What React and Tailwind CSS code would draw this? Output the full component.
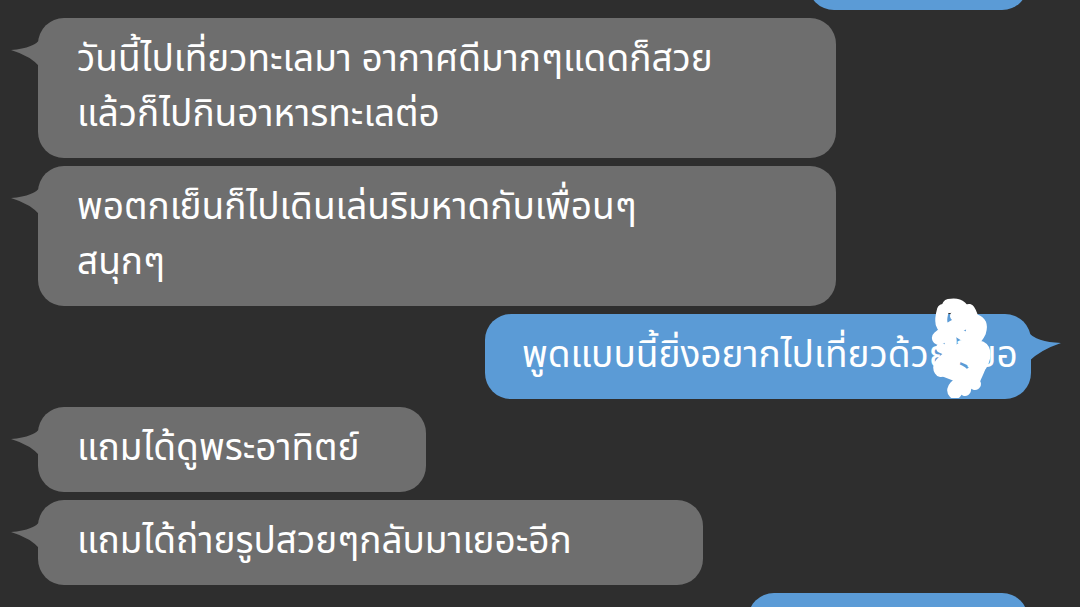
import React from "react";

const font = { fontFamily: '"Noto Sans Thai", "Noto Sans", "Liberation Sans", "DejaVu Sans", sans-serif' };

function LeftTail() {
  return (
    <svg className="absolute left-[-27px] top-[18px]" width="30" height="34" viewBox="0 0 30 34">
      <path d="M30 2 Q24 12 0 14 Q20 20 30 32 Z" fill="#6e6e6e" />
    </svg>
  );
}

function RightTail() {
  return (
    <svg className="absolute right-[-31px] top-[16px]" width="34" height="34" viewBox="0 0 34 34">
      <path d="M0 2 Q8 12 33 13 Q12 20 0 32 Z" fill="#5b9bd6" />
    </svg>
  );
}

function Gray({ w, children, tail = true }) {
  return (
    <div className={`relative ml-[38px] ${w} rounded-[26px] bg-[#6e6e6e] px-[39px] py-[15px] text-white text-[37px] leading-[55px]`} style={font}>
      {tail && <LeftTail />}
      {children}
    </div>
  );
}

export default function App() {
  return (
    <div className="h-[607px] w-[1080px] overflow-hidden bg-[#2e2e2e]">
      <div className="-mt-[75px] flex flex-col gap-2">
        <div className="ml-[808px] h-[85px] w-[220px] rounded-[26px] bg-[#5b9bd6]" />
        <Gray w="w-[798px]">
          <div>วันนี้ไปเที่ยวทะเลมา อากาศดีมากๆแดดก็สวย</div>
          <div>แล้วก็ไปกินอาหารทะเลต่อ</div>
        </Gray>
        <Gray w="w-[798px]">
          <div>พอตกเย็นก็ไปเดินเล่นริมหาดกับเพื่อนๆ</div>
          <div>สนุกๆ</div>
        </Gray>
        <div className="relative ml-[485px] w-[546px] rounded-[26px] bg-[#5b9bd6] py-[15px] pl-[37px] text-white text-[37px] leading-[55px]" style={font}>
          <RightTail />
          <div>พูดแบบนี้ยิ่งอยากไปเที่ยวด้วยพี่ขอ</div>
          <svg className="absolute left-[440px] top-[-16px]" width="70" height="100" viewBox="0 0 70 100">
            <g stroke="white" fill="none" strokeLinecap="round" strokeLinejoin="round">
              <path d="M24 8 C46 4 40 28 14 40 C34 22 60 16 54 34 C46 52 10 62 16 72 C32 54 62 38 58 60 C54 78 24 88 30 94" strokeWidth="14" />
              <path d="M18 12 C10 40 32 22 24 58 C20 80 46 62 40 92 M44 12 C56 30 34 50 52 62 C60 70 46 80 50 86" strokeWidth="12" />
              <path d="M26 30 L48 44 M16 50 L52 66 M20 74 L46 84 M30 18 L56 26" strokeWidth="10" />
            </g>
          </svg>
        </div>
        <Gray w="w-[388px]">
          <div>แถมได้ดูพระอาทิตย์</div>
        </Gray>
        <Gray w="w-[665px]">
          <div>แถมได้ถ่ายรูปสวยๆกลับมาเยอะอีก</div>
        </Gray>
        <div className="ml-[748px] h-[85px] w-[280px] rounded-[26px] bg-[#5b9bd6]" />
      </div>
    </div>
  );
}
